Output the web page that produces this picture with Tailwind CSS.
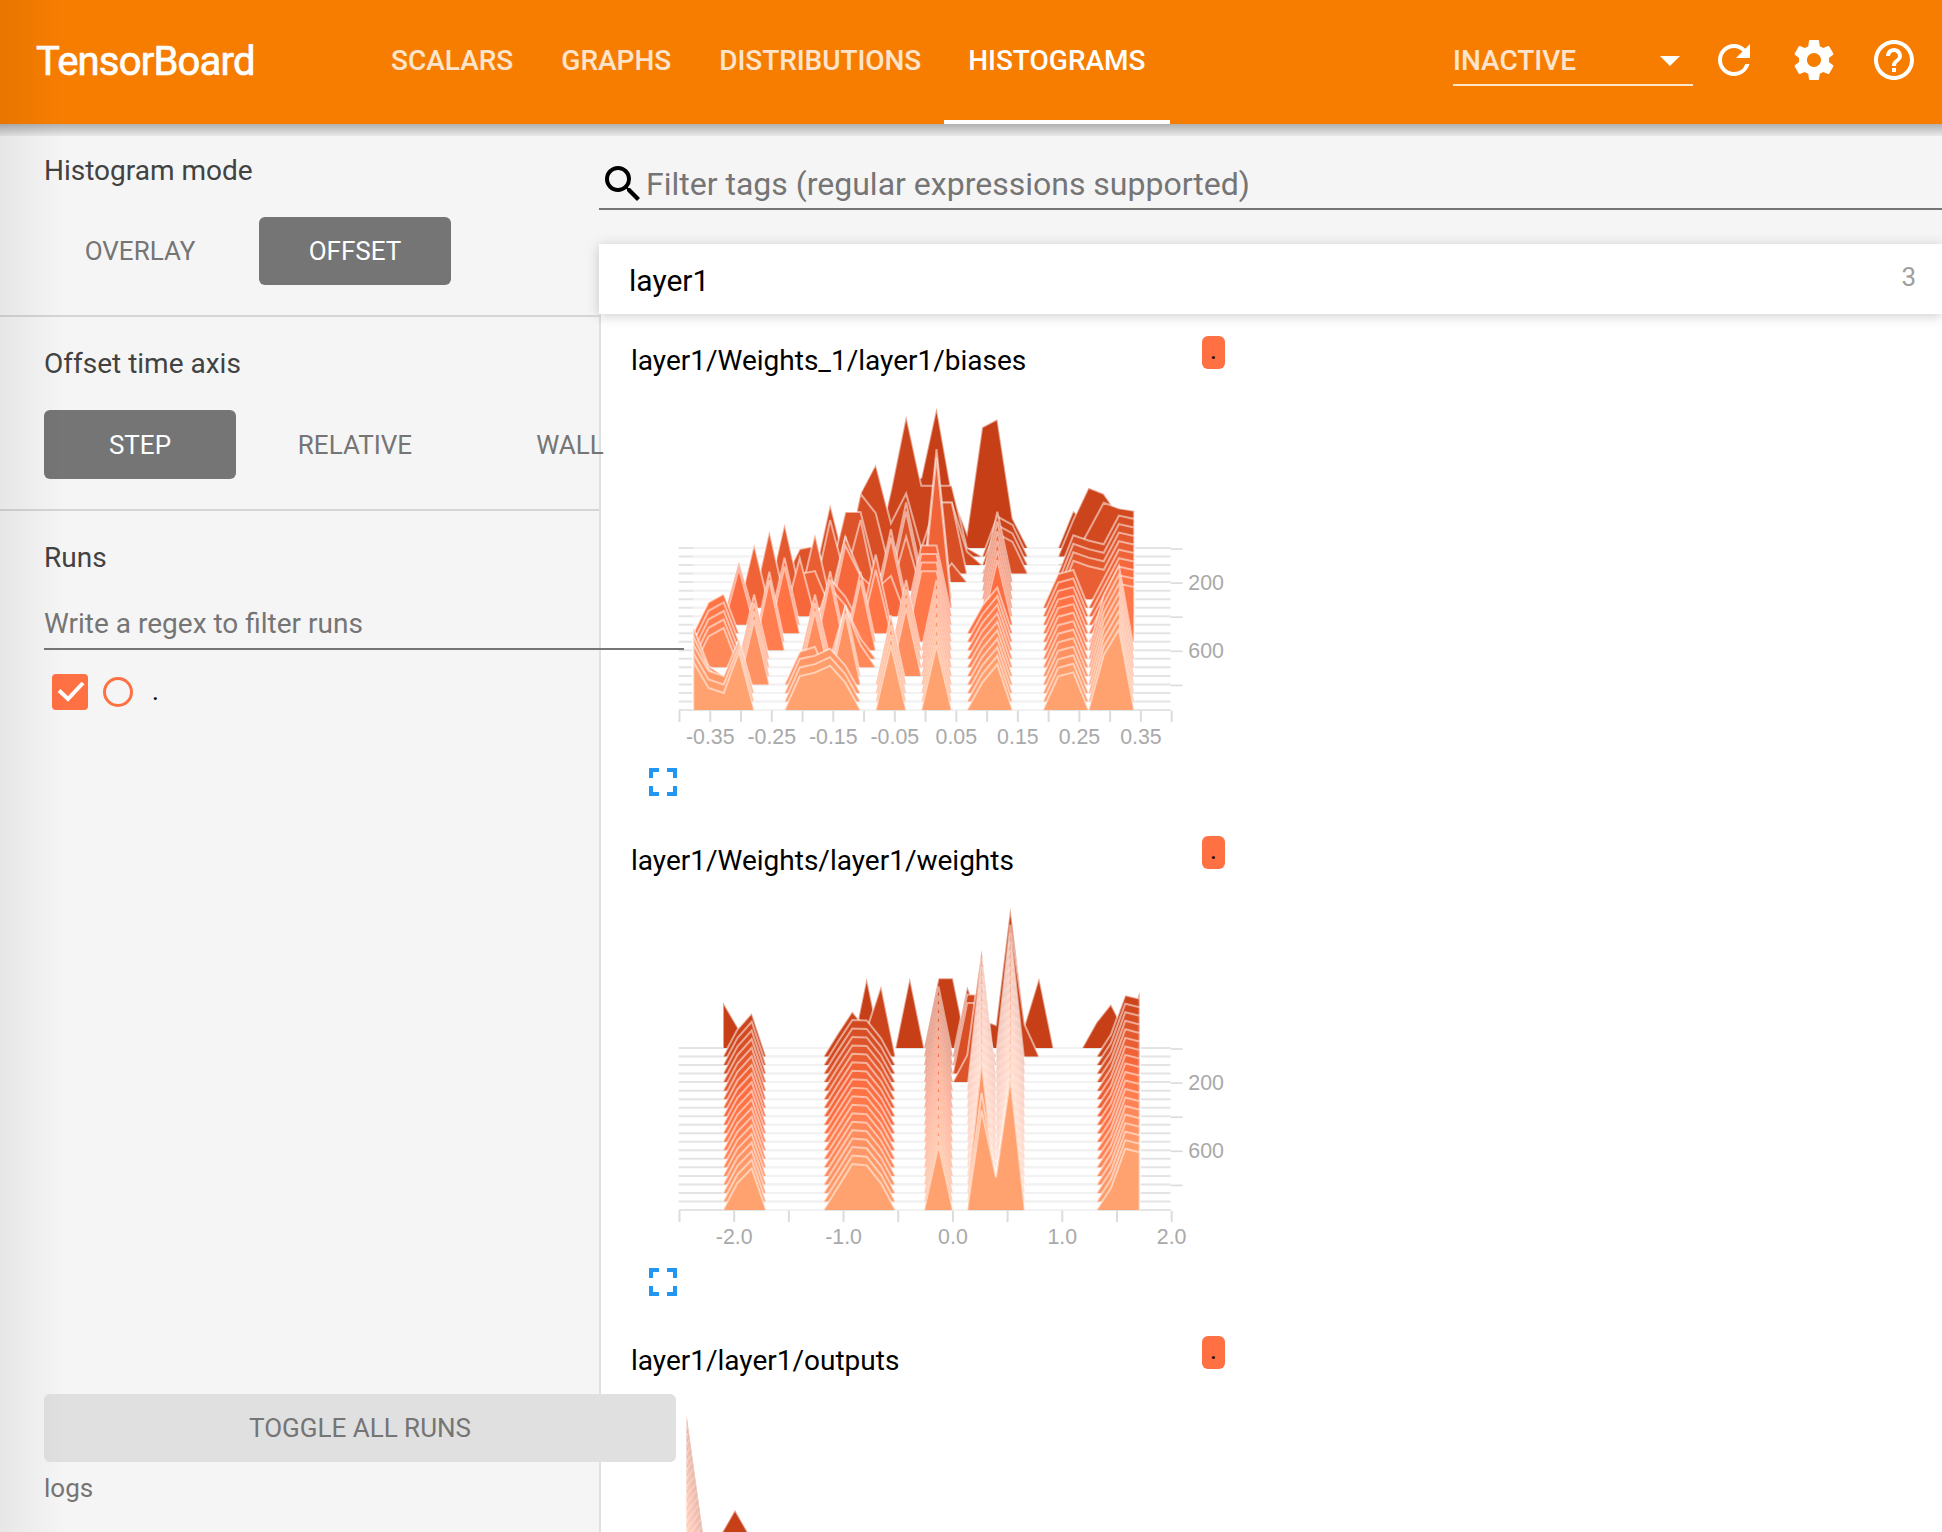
<!DOCTYPE html>
<html lang="en">
<head>
<meta charset="utf-8">
<title>TensorBoard</title>
<script src="https://cdn.jsdelivr.net/npm/@tailwindcss/browser@4"></script>
</head>
<body class="h-[1532px] w-[1942px] overflow-hidden bg-[#f5f5f5] font-[Roboto,sans-serif] text-black">
<div class="relative flex h-[1532px] flex-col overflow-hidden">
  <header class="relative z-20 flex h-[124px] shrink-0 items-center bg-[#f77d00] text-white">
    <h1 class="ml-[36px] w-[331px] pb-[1px] text-[40px] leading-[48px] tracking-[-0.8px] [-webkit-text-stroke:0.7px_white]">TensorBoard</h1>
    <nav class="flex h-full text-[28px] leading-[122px] font-medium">
      <a class="px-[24px] text-white/80">SCALARS</a>
      <a class="px-[24px] text-white/80">GRAPHS</a>
      <a class="px-[24px] tracking-[-0.08px] text-white/80">DISTRIBUTIONS</a>
      <a class="-ml-px border-b-4 border-white px-[24px]">HISTOGRAMS</a>
    </nav>
    <div class="mr-px ml-auto flex h-[48px] w-[240px] items-center justify-between border-b-2 border-white/80">
      <span class="text-[28px] leading-[40px] font-medium text-white/80">INACTIVE</span>
      <svg class="mr-[13px] h-[10px] w-[20px]" viewBox="0 0 20 10"><path d="M0 0h20L10 10z" fill="#fff"/></svg>
    </div>
    <div class="mr-[24px] ml-[16px] flex gap-[32px] pb-[4px]">
      <svg class="size-[48px]" viewBox="0 0 24 24" fill="#fff"><path d="M17.65 6.35A7.958 7.958 0 0 0 12 4c-4.42 0-7.99 3.58-7.99 8s3.57 8 7.99 8c3.73 0 6.84-2.55 7.73-6h-2.08A5.99 5.99 0 0 1 12 18c-3.31 0-6-2.69-6-6s2.69-6 6-6c1.66 0 3.14.69 4.22 1.78L13 11h7V4l-2.350 2.350z"/></svg>
      <svg class="size-[48px]" viewBox="0 0 24 24" fill="#fff"><path d="M19.430 12.980c.04-.32.07-.64.07-.98s-.03-.66-.07-.98l2.110-1.650c.19-.15.24-.42.12-.64l-2-3.460c-.12-.22-.39-.3-.61-.22l-2.490 1c-.52-.4-1.080-.73-1.690-.98l-.38-2.650C14.460 2.180 14.250 2 14 2h-4c-.25 0-.46.18-.49.42l-.38 2.650c-.61.25-1.170.59-1.690.98l-2.490-1c-.23-.09-.49 0-.61.22l-2 3.460c-.13.22-.07.49.12.64l2.110 1.650c-.04.32-.07.65-.07.98s.03.66.07.98l-2.110 1.650c-.19.15-.24.42-.12.64l2 3.460c.12.22.39.3.61.22l2.490-1c.52.4 1.080.73 1.690.98l.38 2.650c.03.24.24.42.49.42h4c.25 0 .46-.18.49-.42l.38-2.650c.61-.25 1.170-.59 1.690-.98l2.490 1c.23.09.49 0 .61-.22l2-3.460c.12-.22.07-.49-.12-.64l-2.110-1.650zM12 15.500c-1.930 0-3.500-1.570-3.500-3.500s1.570-3.500 3.500-3.500 3.500 1.570 3.500 3.500-1.570 3.500-3.500 3.500z"/></svg>
      <svg class="size-[48px]" viewBox="0 0 24 24" fill="#fff"><path d="M11 18h2v-2h-2v2zm1-16C6.480 2 2 6.480 2 12s4.480 10 10 10 10-4.480 10-10S17.520 2 12 2zm0 18c-4.410 0-8-3.590-8-8s3.590-8 8-8 8 3.590 8 8-3.590 8-8 8zm0-14c-2.210 0-4 1.790-4 4h2c0-1.100.9-2 2-2s2 .9 2 2c0 2-3 1.750-3 5h2c0-2.250 3-2.500 3-5 0-2.210-1.790-4-4-4z"/></svg>
    </div>
    <div class="absolute inset-x-0 top-full h-[12px] bg-linear-to-b from-black/28 to-black/5"></div>
  </header>

  <div class="flex min-h-0 flex-1">
    <aside class="relative z-10 flex w-[599px] shrink-0 flex-col text-[28px] leading-[40px] text-[#424242]">
      <section class="flex h-[193px] shrink-0 flex-col border-b-2 border-[#d5d5d5] pt-[27px] pl-[44px]">
        <h3>Histogram mode</h3>
        <div class="mt-[26px] flex gap-[23px] text-center text-[26px] leading-[68px]">
          <button class="h-[68px] w-[192px] rounded-[6px] text-[#757575]">OVERLAY</button>
          <button class="h-[68px] w-[192px] rounded-[6px] bg-[#757575] text-white">OFFSET</button>
        </div>
      </section>
      <section class="flex h-[194px] shrink-0 flex-col border-b-2 border-[#d5d5d5] pt-[27px] pl-[44px]">
        <h3>Offset time axis</h3>
        <div class="mt-[26px] flex gap-[23px] text-center text-[26px] leading-[68px]">
          <button class="h-[69px] w-[192px] shrink-0 rounded-[6px] bg-[#757575] text-white">STEP</button>
          <button class="h-[69px] w-[192px] shrink-0 rounded-[6px] text-[#757575]">RELATIVE</button>
          <button class="h-[69px] w-[192px] shrink-0 rounded-[6px] text-[#757575]">WALL</button>
        </div>
      </section>
      <section class="flex flex-1 flex-col pt-[27px] pl-[44px]">
        <h3>Runs</h3>
        <div class="mt-[26px] h-[46px] w-[640px] border-b-2 border-[#757575] text-[#757575]">Write a regex to filter runs</div>
        <div class="mt-[24px] ml-[8px] flex h-[36px] items-center">
          <svg class="size-[36px]" viewBox="0 0 36 36"><rect width="36" height="36" rx="4" fill="#ff7043"/><path d="M7 16.500l9 8.500L31 9" fill="none" stroke="#fff" stroke-width="4"/></svg>
          <svg class="ml-[14px] size-[32px]" viewBox="0 0 32 32"><circle cx="16" cy="16" r="13.500" fill="none" stroke="#ff7043" stroke-width="3"/></svg>
          <span class="ml-[18px] pb-[2px] text-[26px] text-black">.</span>
        </div>
        <button class="mt-auto h-[68px] w-[632px] rounded-[6px] bg-[#e0e0e0] text-center text-[26px] leading-[68px] text-[#757575]">TOGGLE ALL RUNS</button>
        <p class="mt-[6px] mb-[24px] text-[26px] text-[#757575]">logs</p>
      </section>
    </aside>

    <main class="flex min-w-0 flex-1 flex-col">
      <div class="mt-[36px] flex h-[50px] shrink-0 items-center border-b-2 border-[#757575]">
        <svg class="size-[48px]" viewBox="0 0 24 24"><path d="M15.500 14h-.79l-.28-.27A6.471 6.471 0 0 0 16 9.500 6.500 6.500 0 1 0 9.500 16c1.610 0 3.090-.59 4.230-1.570l.27.28v.79l5 4.990L20.490 19l-4.990-5zm-6 0C7.010 14 5 11.990 5 9.500S7.010 5 9.500 5 14 7.010 14 9.500 11.990 14 9.500 14z"/></svg>
        <span class="-ml-px text-[32px] leading-[40px] text-[#757575]">Filter tags (regular expressions supported)</span>
      </div>
      <div class="relative mt-[34px] flex h-[70px] shrink-0 items-center justify-between bg-white pr-[26px] pl-[30px] shadow-[0_2px_12px_rgba(0,0,0,0.2)]">
        <span class="pt-[4px] text-[30px] leading-[40px]">layer1</span>
        <span class="pb-[4px] text-[26px] leading-[40px] text-[#9e9e9e]">3</span>
      </div>
      <div class="min-h-0 flex-1 overflow-hidden border-l-2 border-[#e0e0e0] bg-white" id="cards"></div>
    </main>
  </div>
  <div class="pointer-events-none absolute inset-y-0 left-0 z-30 w-[64px] bg-linear-to-r from-black/6 to-transparent"></div>
</div>

<script>
// Slice heights: [first slice, last slice, {bin: height}], later entries override earlier ones.
const biases = [
  [0,0,{13:60,14:200,15:211,16:421,17:164,18:44,19:362,20:386,21:89,25:112,26:60}],
  [1,1,{13:197,14:422,15:212,16:212,17:212,18:26}],
  [2,2,{11:215,12:302,13:125,14:215,15:50,16:187,17:187,18:40}],
  [3,3,{9:208,10:27,11:239,12:181,14:213,16:213,17:213}],
  [4,4,{6:10,7:99,8:108,9:20,10:210,11:210,12:30,14:212,17:56}],
  [5,5,{6:201,9:212,10:40,11:212,14:162}],
  [6,6,{5:205,8:196,10:188,13:210,16:450}],
  [7,7,{4:190,7:101,8:110,10:212,11:100,13:210,16:450}],
  [8,8,{3:163,7:174,10:212,11:120,12:80,13:121}],
  [9,9,{3:169,6:201,9:137,10:84,12:211}],
  [10,10,{6:200,9:137,10:84,12:190}],
  [1,3,{20:120,21:95}],
  [4,9,{20:[211,194]}],
  [10,19,{19:82,20:137}],
  [1,1,{25:110,26:206,27:188,28:122,29:60}],
  [2,2,{25:20,26:102,27:187,28:170,29:163}],
  [3,6,{25:115,26:99,27:88,28:174,29:164}],
  [7,19,{24:101,25:113}],
  [7,11,{27:87,28:174,29:164}],
  [12,19,{27:165,28:[254,242]}],
  [8,11,{15:212,16:212}],
  [12,19,{16:[211,195]}],
  [10,14,{1:93,2:118}],
  [11,12,{5:210,9:212,11:210}],
  [13,16,{4:193}],
  [13,15,{8:193}],
  [13,13,{10:156,11:61}],
  [14,14,{10:178,11:67}],
  [15,16,{10:212}],
  [15,15,{0:145,1:30}],
  [16,16,{0:145,1:48,7:98,8:113}],
  [17,19,{0:145,1:66,2:51,3:[160,175],7:102,8:112,9:133,10:82}],
  [12,15,{14:[211,205]}],
  [16,19,{13:[208,195]}],
];
const weights = [
  [0,0,{0:137,1:64,10:210,13:211,15:209,16:209,18:85,19:69,20:421,21:69,22:211,26:77,27:131,28:47,29:168}],
  [1,19,{1:81,2:[130,125],8:[70,68],9:[135,138],10:134,11:80,15:[210,195],18:396,20:396,27:66,28:184,29:173}],
  [1,1,{10:80,11:212,17:210,18:100,21:95}],
  [2,3,{17:212,18:212}],
  [4,4,{17:81}],
  [18,18,{18:326,19:72}],
  [19,19,{18:299,19:98}],
];
const outputs = [
  [0,0,{0:396,1:48,2:30,3:114,4:30}],
  [1,19,{0:396,1:48}],
];

const BACK = [198, 63, 23], MID = [255, 112, 67], FRONT = [255, 162, 112];
function sliceColor(t) {
  const [a, b, u] = t < 0.5 ? [BACK, MID, t * 2] : [MID, FRONT, t * 2 - 1];
  return `rgb(${a.map((v, i) => Math.round(v + (b[i] - v) * u)).join(',')})`;
}
function chart(data, x0, step, xTicks, labels) {
  let out = '';
  for (let k = 0; k < 20; k++) {
    const base = 474 + 25.58 * k, h = new Array(30).fill(0);
    for (const [from, to, bins] of data) {
      if (k < from || k > to) continue;
      for (const i in bins) {
        const v = bins[i];
        h[i] = Array.isArray(v) ? v[0] + (v[1] - v[0]) * (k - from) / (to - from) : v;
      }
    }
    const pts = h.map((v, i) => `L${(x0 + step * i).toFixed(1)} ${(base - v).toFixed(1)}`).join('');
    const d = `M${x0} ${base}${pts}L${(x0 + step * 29).toFixed(1)} ${base}`;
    out += `<path d="M56 ${base}H1532" stroke="#e4e4e4" stroke-width="6"/>`;
    out += `<path d="${d}Z" fill="${sliceColor(k / 19)}"/>`;
    out += `<path d="${d}" fill="none" stroke="#fff" stroke-opacity=".52" stroke-width="6"/>`;
  }
  for (let j = 0; j < xTicks; j++) {
    const x = 58.500 + 1476.500 * j / (xTicks - 1);
    out += `<path d="M${x} 962V996" stroke="#dcdcdc" stroke-width="6"/>`;
    if (j % 2) out += `<text x="${x}" y="1061" text-anchor="middle">${labels[(j - 1) / 2]}</text>`;
  }
  for (let j = 0; j < 5; j++) {
    const y = 477 + 102.300 * j;
    out += `<path d="M1532 ${y}H1568" stroke="#dcdcdc" stroke-width="5"/>`;
    if (j % 2) out += `<text x="1585" y="${y + 20}">${j === 1 ? 200 : 600}</text>`;
  }
  return out;
}
const eight = ['-0.35', '-0.25', '-0.15', '-0.05', '0.05', '0.15', '0.25', '0.35'];
const five = ['-2.0', '-1.0', '0.0', '1.0', '2.0'];
const cards = [
  ['layer1/Weights_1/layer1/biases', chart(biases, 100, 45.6, 17, eight)],
  ['layer1/Weights/layer1/weights', chart(weights, 189, 43.1, 10, five)],
  ['layer1/layer1/outputs', chart(outputs, 80, 48.3, 10, five)],
];
document.getElementById('cards').innerHTML = cards.map(([title, body]) => `
  <article class="h-[500px] w-[680px] pt-[22px]">
    <div class="flex h-[43px] items-start justify-between pr-[56px] pl-[30px]">
      <h4 class="pt-[5px] text-[28px] leading-[40px]">${title}</h4>
      <span class="h-[33px] w-[23px] rounded-[6px] bg-[#ff7043] text-center text-[26px] leading-[29px]">.</span>
    </div>
    <svg class="mt-[11px] ml-[59px] h-[368px] w-[600px] fill-[#a9a9a9] font-['Liberation_Sans',sans-serif] text-[64px]" viewBox="0 0 1800 1104">${body}</svg>
    <svg class="ml-[38px] size-[48px]" viewBox="0 0 24 24" fill="#2196f3"><path d="M7 14H5v5h5v-2H7v-3zm-2-4h2V7h3V5H5v5zm12 7h-3v2h5v-5h-2v3zM14 5v2h3v3h2V5h-5z"/></svg>
  </article>`).join('');
</script>
</body>
</html>
